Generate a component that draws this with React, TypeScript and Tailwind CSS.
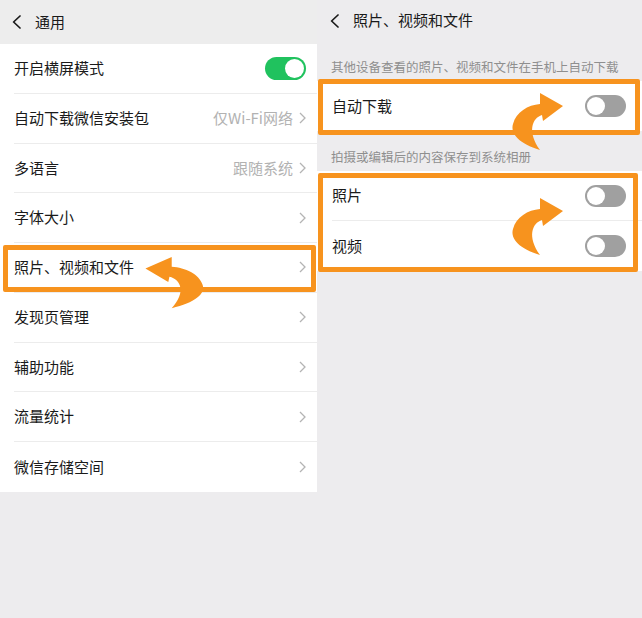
import React from 'react'

type Row = { label: string; value?: string; toggle?: boolean; highlight?: boolean }

const leftRows: Row[] = [
  { label: '开启横屏模式', toggle: true },
  { label: '自动下载微信安装包', value: '仅Wi-Fi网络' },
  { label: '多语言', value: '跟随系统' },
  { label: '字体大小' },
  { label: '照片、视频和文件', highlight: true },
  { label: '发现页管理' },
  { label: '辅助功能' },
  { label: '流量统计' },
  { label: '微信存储空间' },
]

function BackIcon() {
  return (
    <svg width="9" height="14" viewBox="0 0 9 14" className="shrink-0">
      <path d="M8 1L1.6 7L8 13" fill="none" stroke="#1a1a1a" strokeWidth="1.7" strokeLinecap="round" strokeLinejoin="round" />
    </svg>
  )
}

function Chevron() {
  return (
    <svg width="7" height="12" viewBox="0 0 7 12" className="shrink-0">
      <path d="M1 1L6 6L1 11" fill="none" stroke="#b4b4b4" strokeWidth="1.3" />
    </svg>
  )
}

function Toggle({ on }: { on?: boolean }) {
  if (on) {
    return (
      <div className="w-[41px] h-[23px] rounded-full bg-[#20c25e] p-[2px] flex justify-end shrink-0">
        <div className="w-[19px] h-[19px] rounded-full bg-white" />
      </div>
    )
  }
  return (
    <div className="w-[41px] h-[22px] rounded-full bg-[#a0a0a0] p-[2px] flex justify-start shrink-0">
      <div className="w-[18px] h-[18px] rounded-full bg-white" />
    </div>
  )
}

// fat curved arrow, head pointing right; flip mirrors it
function CurvedArrow({ className, flip }: { className: string; flip?: boolean }) {
  return (
    <svg viewBox="0 0 56 60" preserveAspectRatio="none" className={className}>
      <path
        d="M30 1L53 14L33 29L32 23C22 26 17 40 30 58C10 52 0 42 3 32C6 20 18 13 30 12Z"
        fill="#f7931e"
        transform={flip ? 'translate(56 0) scale(-1 1)' : undefined}
      />
    </svg>
  )
}

function Caption({ children }: { children: React.ReactNode }) {
  return <div className="h-[40px] pl-[14px] pt-[17px] text-[12.5px] leading-[17px] text-[#8f8f8f]">{children}</div>
}

function SwitchRow({ label, divider }: { label: string; divider?: boolean }) {
  return (
    <div className="pl-[15px]">
      <div className={divider ? 'h-[50px] flex items-center pr-[16px] border-b border-[#ececec]' : 'h-[50px] flex items-center pr-[16px]'}>
        <span className="flex-1 text-[15px] text-[#1a1a1a]">{label}</span>
        <Toggle />
      </div>
    </div>
  )
}

export default function App() {
  return (
    <div className="w-[642px] h-[618px] flex bg-[#edecee] overflow-hidden font-['Noto_Sans_CJK_SC','Noto_Sans',sans-serif]">
      {/* left: 通用 */}
      <div className="relative w-[317px] shrink-0">
        <div className="h-[44px] flex items-center pl-[12px] bg-[#ededed]">
          <BackIcon />
          <span className="ml-[14px] text-[15px] text-[#1a1a1a]">通用</span>
        </div>
        <div className="bg-white">
          {leftRows.map((r, i) => (
            <div key={r.label} className="relative pl-[14px]">
              <div
                className={
                  i < leftRows.length - 1
                    ? 'h-[49.75px] flex items-center pr-[11px] border-b border-[#ececec]'
                    : 'h-[49.75px] flex items-center pr-[11px]'
                }
              >
                <span className="flex-1 text-[15px] text-[#1a1a1a]">{r.label}</span>
                {r.value && <span className="mr-[6px] text-[15px] text-[#b2b2b2]">{r.value}</span>}
                {r.toggle ? <Toggle on /> : <Chevron />}
              </div>
              {r.highlight && (
                <div className="absolute top-[2px] bottom-[1px] left-[3px] right-[1px] border-[5px] border-[#f7931e] rounded-[2px]" />
              )}
            </div>
          ))}
        </div>
        <CurvedArrow flip className="absolute left-[142px] top-[256px] w-[64px] h-[54px]" />
      </div>

      {/* right: 照片、视频和文件 */}
      <div className="relative flex-1">
        <div className="h-[41px] flex items-center pl-[13px]">
          <BackIcon />
          <span className="ml-[14px] text-[15px] text-[#1a1a1a]">照片、视频和文件</span>
        </div>
        <Caption>其他设备查看的照片、视频和文件在手机上自动下载</Caption>
        <div className="relative bg-white">
          <SwitchRow label="自动下载" />
          <div className="absolute -top-[2px] -bottom-[4px] left-[1px] right-[2px] border-[5px] border-[#f7931e] rounded-[2px]" />
        </div>
        <Caption>拍摄或编辑后的内容保存到系统相册</Caption>
        <div className="relative bg-white">
          <SwitchRow label="照片" divider />
          <SwitchRow label="视频" />
          <div className="absolute top-[2px] -bottom-[1px] left-[1px] right-[4px] border-[5px] border-[#f7931e] rounded-[2px]" />
        </div>
        <CurvedArrow className="absolute left-[193px] top-[92px] w-[56px] h-[60px]" />
        <CurvedArrow className="absolute left-[193px] top-[197px] w-[56px] h-[60px]" />
      </div>
    </div>
  )
}
